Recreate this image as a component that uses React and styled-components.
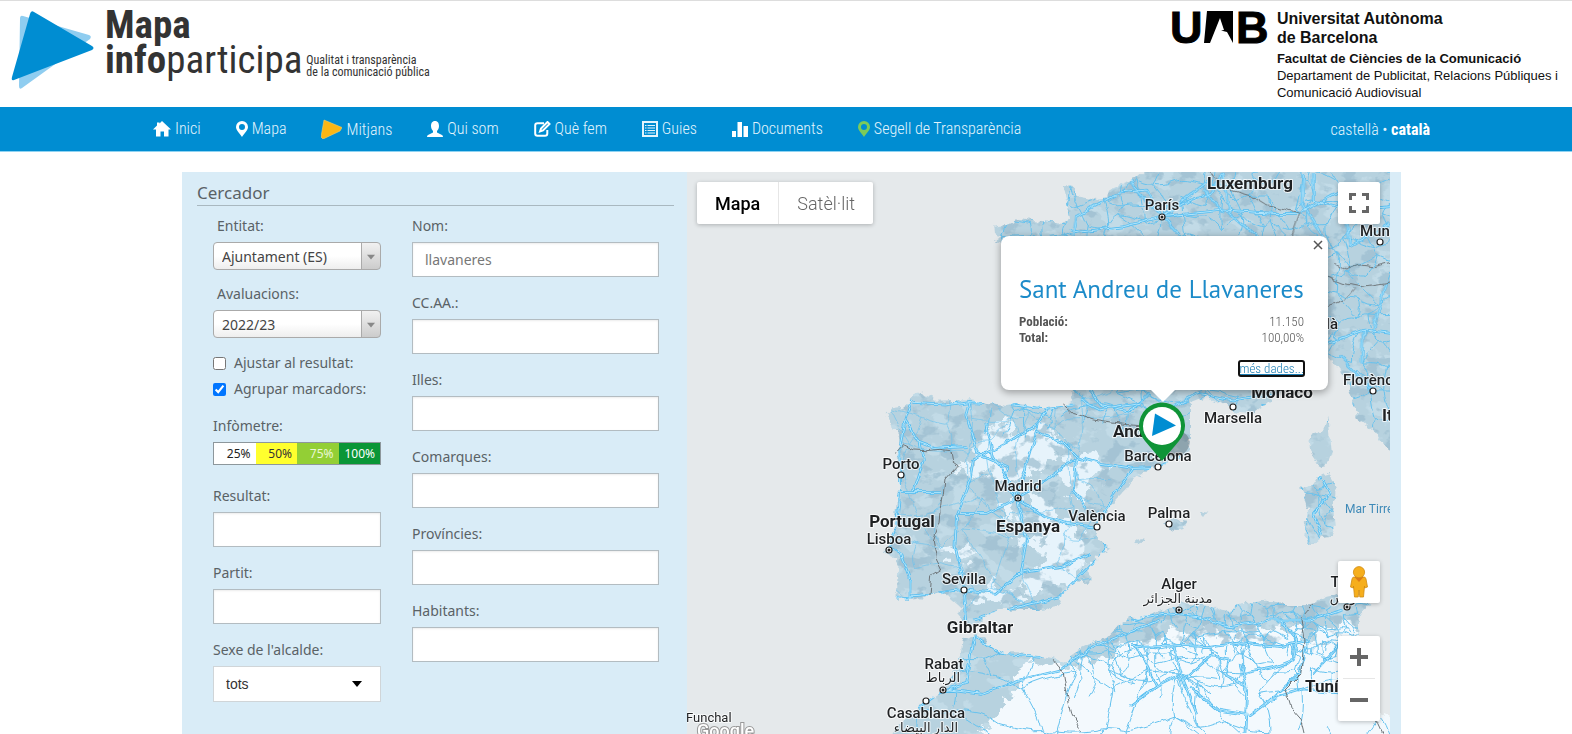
import React, { useState } from 'react'
import styled, { createGlobalStyle, css } from 'styled-components'

const condensed = '"Roboto Condensed", Roboto, sans-serif'
const humanist = '"PT Sans", "Noto Sans", sans-serif'
const formFont = '"Noto Sans", sans-serif'
const helvetica = '"Liberation Sans", Arial, sans-serif'

const GlobalStyle = createGlobalStyle`
    * {
        box-sizing: border-box;
    }

    body {
        margin: 0;
        background: #fff;
        color: #5a6266;
        font-family: ${formFont};
        font-size: 14px;
    }
`

/* ---------- header ---------- */

const Header = styled.header`
    display: flex;
    justify-content: space-between;
    align-items: flex-start;
    height: 107px;
    padding: 7px 14px 0 10px;
    border-top: 1px solid #ddd;
`

const Brand = styled.a`
    display: flex;
    align-items: flex-start;
    color: #333;
    font-family: ${condensed};
    text-decoration: none;

    svg {
        margin: 2px 10px 0 0;
    }
`

const BrandName = styled.span`
    font-size: 39px;
    font-weight: 400;
    line-height: 35px;

    b {
        font-weight: 700;
    }
`

const Tagline = styled.span`
    margin: 46px 0 0 4px;
    font-size: 12px;
    line-height: 12px;
`

const University = styled.div`
    display: flex;
    gap: 8px;
    color: #111;
    font-family: ${helvetica};
    font-size: 13px;
    line-height: 17px;

    p {
        margin: 0;
    }
`

const UniversityName = styled.p`
    padding: 1px 0 3px;
    font-size: 16px;
    font-weight: 700;
    line-height: 19px;
`

/* ---------- navigation ---------- */

const Nav = styled.nav`
    display: flex;
    justify-content: space-between;
    align-items: center;
    height: 45px;
    padding: 0 142px 0 153px;
    background: #008dd2;
    border-bottom: 1px solid #8fd3f2;
    font-family: ${condensed};
    font-size: 16px;
    font-weight: 300;
`

const NavList = styled.ul`
    display: flex;
    gap: 35px;
    margin: 0;
    padding: 0;
    list-style: none;
`

const NavLink = styled.a`
    display: flex;
    align-items: center;
    gap: 4px;
    color: #e2f4fd;
    text-decoration: none;
`

const Languages = styled.div`
    color: #e2f4fd;

    a {
        color: inherit;
        text-decoration: none;
    }

    a[aria-current] {
        color: #fff;
        font-weight: 700;
    }
`

/* ---------- search form ---------- */

const Main = styled.main`
    display: flex;
    margin: 20px 171px 0 182px;
    padding-right: 11px;
    background: #d9ecf7;
`

const Search = styled.form`
    flex: 0 0 505px;
    padding: 9px 13px 33px 15px;
`

const SearchTitle = styled.h2`
    margin: 0 0 8px;
    border-bottom: 1px solid #a9b8c0;
    font-size: 17px;
    font-weight: 400;
    line-height: 24px;
`

const Columns = styled.div`
    display: grid;
    grid-template-columns: 168px 247px;
    gap: 31px;
    padding-left: 16px;
`

const Column = styled.div`
    display: flex;
    flex-direction: column;
    gap: 14px;
`

const Filters = styled.div`
    display: flex;
    flex-direction: column;
    gap: 12px;
`

const Field = styled.div`
    display: flex;
    flex-direction: column;
    gap: 4px;
    line-height: 24px;
`

const Label = styled.label`
    padding-left: ${props => (props.$indent ? '4px' : '0')};
`

const box = css`
    width: 100%;
    border: 1px solid #b3bcc1;
    background: #fff;
    color: #777;
`

const TextInput = styled.input`
    ${box}
    height: 35px;
    padding: 0 12px;
    box-shadow: inset 0 1px 2px rgba(0, 0, 0, 0.08);
    font-family: ${formFont};
    font-size: 14px;
`

const SelectWrap = styled.div`
    position: relative;
    display: flex;

    svg {
        position: absolute;
        top: ${props => (props.$plain ? '15px' : '12px')};
        right: ${props => (props.$plain ? '19px' : '6px')};
        pointer-events: none;
    }
`

const ChosenSelect = styled.select`
    ${box}
    height: 28px;
    padding: 0 8px;
    border-color: #aaa;
    border-radius: 4px;
    appearance: none;
    background:
        linear-gradient(#aaa, #aaa) right 18px top / 1px 100% no-repeat,
        linear-gradient(#f1f1f1, #ccc) right / 18px 100% no-repeat,
        linear-gradient(#fff 50%, #eee);
    color: #444;
    font-family: ${formFont};
    font-size: 14px;
`

const PlainSelect = styled.select`
    ${box}
    height: 36px;
    padding: 0 12px;
    border-color: #d0d5d8;
    appearance: none;
    color: #333;
    font-family: ${helvetica};
    font-size: 14px;
`

const Checks = styled.div`
    display: flex;
    flex-direction: column;
`

const Check = styled.label`
    display: flex;
    align-items: center;
    gap: 8px;
    line-height: 26px;

    input {
        width: 13px;
        height: 13px;
        margin: 0;
    }
`

const Meter = styled.div`
    display: grid;
    grid-template-columns: repeat(4, 1fr);
    margin-bottom: 5px;
    border: 1px solid #8d979c;
    font-size: 12px;
    line-height: 21px;
`

const Step = styled.span`
    padding-right: 5px;
    background: ${props => props.$bg};
    color: ${props => props.$ink};
    text-align: right;
`

/* ---------- map ---------- */

const MapArea = styled.section`
    position: relative;
    flex: 1;
    min-width: 0;
    overflow: hidden;
    background: #e5e9eb;
    font-family: Roboto, sans-serif;
`

const MapCanvas = styled.svg`
    position: absolute;
    inset: 0;
    width: 100%;
    height: 100%;
`

const MapTypes = styled.div`
    position: absolute;
    top: 10px;
    left: 10px;
    display: flex;
    background: #fff;
    border-radius: 2px;
    box-shadow: 0 1px 4px rgba(0, 0, 0, 0.25);
`

const MapType = styled.button`
    height: 42px;
    padding: 0 18px;
    border: 0;
    background: none;
    color: ${props => (props.$active ? '#000' : '#666')};
    font-family: Roboto, sans-serif;
    font-size: 18px;
    font-weight: ${props => (props.$active ? 500 : 300)};

    & + & {
        border-left: 1px solid #e6e6e6;
    }
`

const ControlStack = styled.div`
    position: absolute;
    right: 10px;
    ${props => (props.$top ? 'top: 10px;' : 'bottom: 14px;')}
    display: flex;
    flex-direction: column;
    gap: 33px;
`

const ControlGroup = styled.div`
    display: flex;
    flex-direction: column;
    background: #fff;
    border-radius: 2px;
    box-shadow: 0 1px 4px rgba(0, 0, 0, 0.25);
`

const Control = styled.button`
    display: flex;
    align-items: center;
    justify-content: center;
    width: 42px;
    height: 42px;
    padding: 0;
    border: 0;
    background: none;
`

const Divider = styled.span`
    height: 1px;
    margin: 0 5px;
    background: #e6e6e6;
`

const Popup = styled.article`
    position: absolute;
    top: 64px;
    left: 314px;
    width: 327px;
    padding: 36px 24px 14px 18px;
    border-radius: 8px;
    background: #fff;
    box-shadow: 0 2px 7px 1px rgba(0, 0, 0, 0.3);
    color: #555;
    font-family: ${condensed};
    font-size: 13px;
    line-height: 16px;

    &::after {
        content: '';
        position: absolute;
        top: 100%;
        left: 150px;
        border: 12px solid transparent;
        border-top-color: #fff;
        border-bottom-width: 0;
    }

    h3 {
        margin: 0 0 8px;
        color: #1c8bc9;
        font-family: ${humanist};
        font-size: 25px;
        font-weight: 400;
        line-height: 34px;
        white-space: nowrap;
    }
`

const CloseButton = styled.button`
    position: absolute;
    top: 2px;
    right: 3px;
    display: flex;
    padding: 2px;
    border: 0;
    background: none;
`

const Facts = styled.dl`
    display: grid;
    grid-template-columns: 1fr auto;
    margin: 0 0 15px;

    dt {
        font-weight: 700;
    }

    dd {
        margin: 0;
        font-weight: 300;
        text-align: right;
    }
`

const MoreLink = styled.a`
    display: block;
    width: fit-content;
    margin-left: auto;
    border-radius: 2px;
    outline: 2px solid #101010;
    outline-offset: -1px;
    color: #1c7fb5;
    font-weight: 300;
    line-height: 15px;
`

const Place = styled.text`
    fill: ${props => (props.$sea ? '#3f8ab8' : '#1f2123')};
    stroke: ${props => (props.$sea ? 'none' : 'rgba(255, 255, 255, 0.75)')};
    stroke-width: 2px;
    stroke-linejoin: round;
    paint-order: stroke;
    font-family: Roboto, "DejaVu Sans", sans-serif;
    font-size: ${props => (props.$country ? 17 : props.$sea ? 12 : props.$small ? 13 : 15)}px;
    font-weight: ${props => (props.$country ? 700 : props.$sea || props.$small ? 400 : 500)};
`

/* ---------- drawings ---------- */

const Triangle = () => (
    <svg width="85" height="80" viewBox="0 0 85 80" aria-hidden="true">
        <path d="M13 6 L79 25 Q82 26 80 29 L12 78 Q9 80 9 76 L10 9 Q10 5 13 6Z" fill="#8fcdf0" />
        <path d="M24 2 L82 36 Q85 38 82 40 L4 70 Q1 71 2 67 L20 4 Q21 0 24 2Z" fill="#008dd2" />
    </svg>
)

const UabLogo = () => (
    <svg width="100" height="40" viewBox="0 0 100 40" role="img" aria-label="UAB">
        <g fontFamily="Liberation Sans, Arial, sans-serif" fontWeight="700" fontSize="45" stroke="#000" strokeWidth="1">
            <text x="1" y="35">U</text>
            <text x="67" y="35">B</text>
        </g>
        <path d="M38 3H64V35L58 24L52 22.500L55 22L51 10L41 35H35Z" />
    </svg>
)

const icons = {
    home: <path d="M9 0L18 8.500H15.500V15.500H11V10.500H7.500V15.500H3V8.500H0L4 4.500V1.500H6.500V2.500Z" fill="#fff" />,
    pin: <path fillRule="evenodd" d="M6 0A6 6 0 0 1 12 6C12 9 8 13 6 16C4 13 0 9 0 6A6 6 0 0 1 6 0ZM6 3A3 3 0 1 0 6 9A3 3 0 1 0 6 3Z" />,
    play: <path d="M3 1L21 8.500L19 12L2 20L0 18Z" fill="#fbb615" stroke="#f2d06b" strokeWidth=".6" />,
    user: <path d="M8 0C11 0 12 2.500 12 5C12 7 11 9 10 10V11.500L15 14Q16 14.500 16 16H0Q0 14.500 1 14L6 11.500V10C5 9 4 7 4 5C4 2.500 5 0 8 0Z" fill="#fff" />,
    edit: <path d="M10 2.200H3.500Q1.200 2.200 1.200 4.500V12.500Q1.200 14.800 3.500 14.800H11Q13.300 14.800 13.300 12.500V9M6 10.500L7 7.500L13.500 1L15.500 3L9 9.500Z" fill="none" stroke="#fff" strokeWidth="2" />,
    list: <g fill="none" stroke="#e2f4fd" strokeWidth="2"><path d="M1 1H15V15H1Z" /><path d="M3 4.500H13M3 7H13M3 9.500H13M3 12H13" strokeWidth="1.200" strokeDasharray="1.500 1 8" /></g>,
    bars: <path d="M0 10H4V16H0ZM5.500 1H10V16H5.500ZM11.500 5H16V16H11.500Z" fill="#fff" />,
}

const Icon = ({ name, w = 16, h = 16, fill }) => (
    <svg width={w} height={h} viewBox={`0 0 ${w} ${h}`} fill={fill} aria-hidden="true">{icons[name]}</svg>
)

const Caret = ({ w, color }) => (
    <svg width={w} height="7" viewBox="0 0 10 7" aria-hidden="true"><path d="M0 0H10L5 6Z" fill={color} /></svg>
)

const Pegman = () => (
    <svg width="18" height="32" viewBox="0 0 18 32" fill="#f6ae1c" stroke="#cf8a12" strokeWidth=".8" aria-hidden="true">
        <path d="M4 11H14Q15.500 11 16 13L17.500 21L14.500 22V20L13.500 31H9.800L9 24L8.200 31H4.500L3.500 20V22L.5 21L2 13Q2.500 11 4 11Z" />
        <path d="M4.500 11H13.500L9 16Z" fill="#dd7a17" stroke="none" />
        <circle cx="9" cy="6.200" r="5.600" />
    </svg>
)

/* ---------- map data ---------- */

const IBERIA = 'M80 105L100 85 130 80 155 60 165 42 185 38 215 50 225 62 290 60 340 62 380 68 440 75 480 72 540 80 600 78 640 70 650 0 990 0 990 180 985 215 920 255 893 262 850 280 820 295 790 335 760 365 735 395 705 440 710 470 748 505 715 530 690 560 688 605 650 605 610 640 590 680 540 690 470 690 415 690 370 710 345 735 320 730 295 700 300 680 270 655 230 640 200 650 150 660 105 655 115 630 110 580 115 530 90 530 70 510 85 500 95 470 105 420 115 350 118 290 110 230 118 190 115 150 95 150 90 125Z'
const FRANCE = 'M480 -10L440 25 400 40 360 60 355 85 320 90 270 80 250 50 215 48 225 75 235 105 240 150 235 160 180 155 130 150 90 145 50 165 10 170 12 190 40 195 15 215 40 225 90 260 150 300 230 400 270 560 245 700 300 760 400 840 590 800 590 740 600 700 650 680 690 700 740 725 790 730 830 700 860 670 900 640 960 590 1015 560 1050 600 1085 680 1100 740 1150 780 1185 830 1215 850 1215 -10Z'
const AFRICA = 'M810 715L770 740 740 770 690 790 650 810 620 850 580 835 530 825 480 820 430 820 395 800 360 765 345 762 310 775 300 830 280 880 250 930 200 965 150 1000 110 1040 90 1075 1600 1075 1600 1020 1540 990 1535 830 1500 770 1495 710 1510 690 1530 670 1510 660 1450 640 1400 650 1350 675 1280 675 1230 660 1200 665 1140 670 1110 695 1040 675 960 670 930 685 870 705Z'
const CORSICA = 'M1015 740L1020 790 1025 840 1005 890 985 880 960 840 955 810 970 790 1000 780 1010 760Z'
const SARDINIA = 'M510 75L530 85 560 65 570 48 590 42 605 55 620 80 618 110 610 150 615 200 605 230 580 235 560 250 535 248 525 235 530 190 535 150 520 110Z'
const ISLANDS = 'M100 190L140 178 175 182 160 210 140 215 105 200ZM208 150L235 155 225 168ZM15 250L30 238 40 240 30 258ZM555 5L592 5 575 18Z'

const PLAINS = 'M345 165L390 150 430 130 460 175 500 160 530 130 610 170 620 230 560 250 500 290 430 310 380 270 330 290ZM600 265L680 230 750 250 730 290 700 310 670 390 640 350 620 340ZM500 340L560 340 600 410 680 470 670 560 640 610 600 625 480 630 500 580 560 540 540 500 440 490 500 470 560 470 540 400ZM240 500L330 490 370 540 340 545 300 560ZM330 650L420 620 500 650 430 680ZM440 350L480 380 460 430 420 400ZM290 260L320 240 330 270Z'
const SAHARA = 'M500 830L560 850 620 870 700 845 760 810 900 770 1000 745 1100 750 1250 740 1380 760 1480 740 1520 800 1600 1000 1600 1090 350 1090 400 1000 430 960 480 930 470 880Z'

const BORDERS = [
    ['translate(860 380) scale(.33333)', 'M110 215L130 195 160 210 200 212 240 208 270 212 275 240 295 255 255 300 250 340 245 380 240 425 220 480 230 540 245 570 215 590 210 645M610 75L640 100 700 120 760 130 850 138M580 838L610 880 620 940 635 1000 665 1055'],
    ['translate(990 170) scale(.33333)', 'M640 0L680 20 720 60 790 80 830 105 880 115 930 130 905 200M1030 280L1070 300 1110 285 1150 290 1210 275M1010 320L1060 340 1110 350 1210 335M1010 410L1060 390 1090 355'],
    ['translate(1130 460) scale(.33333)', 'M545 435L515 470 525 540 520 600 515 640 465 690 480 740 515 780 525 822M745 750L740 790 755 822'],
]

const MAIN_ROADS = [
    ['translate(860 380) scale(.33333)', 'M155 60L135 120 120 200 118 350 110 430 85 500 120 520 150 600 150 655M135 120L180 190 220 205 320 200M330 65L320 110 340 170 350 220 440 260 440 330 473 355M160 70L250 75 330 65 460 72 560 85 640 75M560 85L530 130 440 190 340 240 330 300 290 400 285 500 315 630M530 150L610 190 650 230 720 250 820 265 893 262 980 220M820 265L760 350 710 440 740 505 690 560 600 650 420 695 340 720M473 355L500 250 535 130M473 355L560 300 650 235M473 355L550 410 620 430 710 442M473 355L380 400 290 400M473 355L500 480 480 580 410 640 313 630 210 645 110 655M480 580L600 560 690 520M473 355L450 310 400 230 380 130M118 335L240 335M180 190L190 240 160 330M690 30L720 75 800 95 850 60M650 235L640 330 680 390M313 630L320 720M345 765L330 850 320 910 250 930 150 1000M250 925L370 940 480 900 600 870 700 800 900 720M345 765L420 820 560 830'],
    ['translate(990 170) scale(.33333)', 'M516 140L470 60 380 70M516 140L430 50 410 10M516 140L600 90 660 70 700 10M516 140L700 120 850 130 930 130M516 140L400 170 240 190M516 140L570 200M516 140L660 30M250 200L260 140 380 75M700 130L640 60M700 10L720 130 800 200M940 10L935 100 1000 200M930 130L1060 60M1060 60L1080 230 1200 160M970 10L970 90 1080 120 1200 110M1010 520L1120 480 1200 490M1120 480L1115 580M1150 660L1050 560M1190 340L1150 480M270 690L330 720 450 700 480 670M530 720L620 670 730 690 860 670'],
    ['translate(1130 460) scale(.33333)', 'M0 480L100 460 200 470 300 500 420 480 540 480 640 450M0 560L130 555 230 560 330 545 450 560 540 540M20 560L80 680 0 740M130 555L160 660 200 760M160 660L240 590 300 600M180 680L260 750 360 765 420 720 510 640 530 560M330 610L350 690 345 822M300 600L290 650 350 680M80 680L160 640M420 720L520 690 640 700M550 640L640 540M450 480L500 540 490 600 440 620 340 640M555 15L570 60M580 60L600 100 550 160 575 230'],
]

const makeRandom = seed => () => {
    seed = (seed * 1664525 + 1013904223) % 4294967296
    return seed / 4294967296
}

// jittered grid of junctions, joined to their neighbours
const roadNet = ({ seed, x, y, w, h, step }) => {
    const random = makeRandom(seed)
    const cols = Math.ceil(w / step) + 1
    const rows = Math.ceil(h / step) + 1
    const at = []
    for (let r = 0; r < rows; r++) {
        at.push([])
        for (let c = 0; c < cols; c++) {
            at[r].push([x + (c + random() * 0.9 - 0.45) * step, y + (r + random() * 0.9 - 0.45) * step])
        }
    }
    let d = ''
    const join = (a, b) => {
        const bend = () => (random() - 0.5) * step * 0.5
        const mx = (a[0] + b[0]) / 2 + bend()
        const my = (a[1] + b[1]) / 2 + bend()
        d += `M${a[0].toFixed(1)} ${a[1].toFixed(1)}Q${mx.toFixed(1)} ${my.toFixed(1)} ${b[0].toFixed(1)} ${b[1].toFixed(1)}`
    }
    for (let r = 0; r < rows - 1; r++) {
        for (let c = 0; c < cols - 1; c++) {
            if (random() < 0.72) join(at[r][c], at[r][c + 1])
            if (random() < 0.72) join(at[r][c], at[r + 1][c])
            if (random() < 0.25) join(at[r][c], at[r + 1][c + 1])
        }
    }
    return d
}

const MINOR_ROADS = [
    { seed: 11, x: 990, y: 165, w: 410, h: 260, step: 19 },
    { seed: 5, x: 880, y: 390, w: 240, h: 235, step: 30 },
    { seed: 23, x: 1075, y: 605, w: 320, h: 50, step: 10 },
    { seed: 42, x: 1075, y: 640, w: 320, h: 40, step: 17 },
    { seed: 31, x: 930, y: 650, w: 460, h: 100, step: 34 },
    { seed: 8, x: 1300, y: 480, w: 50, h: 70, step: 20 },
].map(roadNet)

const PLACES = [
    { name: 'Luxemburg', x: 1250, y: 189, country: true },
    { name: 'París', x: 1162, y: 210, dot: [1162, 217], capital: true },
    { name: 'Munic', x: 1360, y: 236, start: true, dot: [1380, 242] },
    { name: 'Milà', x: 1338, y: 329, end: true },
    { name: 'Florència', x: 1343, y: 385, start: true, dot: [1373, 391] },
    { name: 'Itàlia', x: 1382, y: 421, start: true, country: true },
    { name: 'Monaco', x: 1282, y: 398, country: true },
    { name: 'Marsella', x: 1233, y: 423, dot: [1233, 407] },
    { name: 'Andorra', x: 1113, y: 437, start: true, country: true },
    { name: 'Barcelona', x: 1158, y: 461, dot: [1158, 467] },
    { name: 'Porto', x: 901, y: 469, dot: [901, 475] },
    { name: 'Madrid', x: 1018, y: 491, dot: [1018, 498], capital: true },
    { name: 'València', x: 1097, y: 521, dot: [1097, 527] },
    { name: 'Espanya', x: 1028, y: 532, country: true },
    { name: 'Palma', x: 1169, y: 518, dot: [1169, 524] },
    { name: 'Portugal', x: 902, y: 527, country: true },
    { name: 'Lisboa', x: 889, y: 544, dot: [889, 550], capital: true },
    { name: 'Sevilla', x: 964, y: 584, dot: [964, 590] },
    { name: 'Gibraltar', x: 980, y: 633, country: true },
    { name: 'Rabat', x: 944, y: 669, dot: [943, 690], capital: true },
    { name: 'الرباط', x: 943, y: 682, small: true },
    { name: 'Casablanca', x: 926, y: 718, dot: [926, 701] },
    { name: 'الدار البيضاء', x: 926, y: 732, small: true },
    { name: 'Alger', x: 1179, y: 589, dot: [1179, 610], capital: true },
    { name: 'مدينة الجزائر', x: 1178, y: 603, small: true },
    { name: 'Tunis', x: 1349, y: 587, dot: [1347, 607], capital: true },
    { name: 'تونس', x: 1345, y: 602, small: true },
    { name: 'Tunísia', x: 1305, y: 692, start: true, country: true },
    { name: 'Mar Tirrena', x: 1345, y: 513, start: true, sea: true },
    { name: 'Funchal', x: 686, y: 722, start: true, small: true },
]

const anchorOf = p => (p.start ? 'start' : p.end ? 'end' : 'middle')

const Land = () => (
    <>
        <g transform="translate(860 380) scale(.33333)"><path d={IBERIA} /></g>
        <g transform="translate(990 170) scale(.33333)"><path d={FRANCE} /><path d={CORSICA} /></g>
        <g transform="translate(860 380) scale(.33333)"><path d={AFRICA} /></g>
        <g transform="translate(1130 460) scale(.33333)"><path d={SARDINIA} /><path d={ISLANDS} /></g>
    </>
)

const TerrainMap = () => (
    <MapCanvas role="img" aria-label="Mapa">
        <defs>
            <filter id="rough" filterUnits="userSpaceOnUse" x="680" y="165" width="1200" height="600">
                <feTurbulence type="fractalNoise" baseFrequency=".12" numOctaves="3" seed="4" />
                <feDisplacementMap in="SourceGraphic" scale="9" xChannelSelector="R" yChannelSelector="G" />
            </filter>
            <filter id="patches" filterUnits="userSpaceOnUse" x="680" y="165" width="1200" height="600">
                <feTurbulence type="fractalNoise" baseFrequency=".06" numOctaves="4" seed="17" />
                <feDisplacementMap in="SourceGraphic" scale="34" xChannelSelector="R" yChannelSelector="G" />
            </filter>
            <filter id="wobble" filterUnits="userSpaceOnUse" x="680" y="165" width="1200" height="600">
                <feTurbulence type="fractalNoise" baseFrequency=".08" numOctaves="2" seed="9" />
                <feDisplacementMap in="SourceGraphic" scale="7" xChannelSelector="R" yChannelSelector="G" />
            </filter>
            <filter id="hills" x="0" y="0" width="1" height="1" colorInterpolationFilters="sRGB">
                <feTurbulence type="fractalNoise" baseFrequency=".05 .07" numOctaves="4" seed="12" />
                <feColorMatrix values="0 0 0 0 .62  0 0 0 0 .75  0 0 0 0 .82  10 0 0 0 -5.5" />
            </filter>
            <filter id="fields" x="0" y="0" width="1" height="1" colorInterpolationFilters="sRGB">
                <feTurbulence type="fractalNoise" baseFrequency=".04 .055" numOctaves="4" seed="31" />
                <feColorMatrix values="0 0 0 0 .85  0 0 0 0 .93  0 0 0 0 .97  14 0 0 0 -8" />
            </filter>
            <mask id="land" maskUnits="userSpaceOnUse" x="680" y="165" width="1200" height="600">
                <g fill="#fff" filter="url(#rough)"><Land /></g>
            </mask>
        </defs>
        <g transform="translate(-687 -172)">
            <g mask="url(#land)">
                <rect x="680" y="165" width="1200" height="600" fill="#b7d2df" />
                <rect x="860" y="165" width="540" height="600" filter="url(#fields)" opacity=".35" />
                <g filter="url(#patches)">
                    <g transform="translate(860 380) scale(.33333)">
                        <path d={PLAINS} fill="#e6f3fb" />
                        <path d={SAHARA} fill="#f3f9fd" />
                    </g>
                </g>
                <rect x="860" y="165" width="540" height="480" filter="url(#hills)" opacity=".75" />
                <g fill="none" strokeLinejoin="round" filter="url(#wobble)">
                    {MINOR_ROADS.map((d, i) => (
                        <path key={i} d={d} stroke="#66c2ee" strokeWidth="1" opacity={i === 1 ? 0.6 : 1} />
                    ))}
                    {MAIN_ROADS.map(([transform, d]) => (
                        <g key={d} transform={transform}>
                            <path d={d} stroke="#56bdf0" strokeWidth="8" />
                            <path d={d} stroke="#b5e7fc" strokeWidth="3" />
                        </g>
                    ))}
                </g>
            </g>
            <g fill="none" stroke="#6d7478" filter="url(#wobble)">
                {BORDERS.map(([transform, d]) => (
                    <path key={d} transform={transform} d={d} strokeWidth="3" />
                ))}
            </g>
            {PLACES.filter(p => p.dot).map(p => (
                <g key={p.name} stroke="#222" fill="#fff">
                    <circle cx={p.dot[0]} cy={p.dot[1]} r="3" strokeWidth="1.200" />
                    {p.capital && <circle cx={p.dot[0]} cy={p.dot[1]} r="1.500" fill="#222" stroke="none" />}
                </g>
            ))}
            {PLACES.map(p => (
                <Place key={p.name} x={p.x} y={p.y} textAnchor={anchorOf(p)} $country={p.country} $sea={p.sea} $small={p.small}>
                    {p.name}
                </Place>
            ))}
            <text x="697" y="737" fontFamily="Roboto, sans-serif" fontSize="18" fontWeight="500" fill="#fff" stroke="#999" strokeWidth="2" paintOrder="stroke">Google</text>
            <ellipse cx="1176" cy="444" rx="14" ry="12" fill="#000" opacity=".22" transform="rotate(-30 1176 444)" />
            <path d="M1162 461L1145 441A23 23 0 1 1 1179 441Z" fill="#0f9437" />
            <circle cx="1162" cy="426" r="19" fill="#fff" />
            <path d="M1155 413.500L1176 425.500L1152 436Z" fill="#008dd2" />
        </g>
    </MapCanvas>
)

/* ---------- page ---------- */

const NAV = [
    { label: 'Inici', icon: 'home', w: 18 },
    { label: 'Mapa', icon: 'pin', w: 12, fill: '#fff' },
    { label: 'Mitjans', icon: 'play', w: 21, h: 20 },
    { label: 'Qui som', icon: 'user' },
    { label: 'Què fem', icon: 'edit', w: 17 },
    { label: 'Guies', icon: 'list' },
    { label: 'Documents', icon: 'bars' },
    { label: 'Segell de Transparència', icon: 'pin', w: 12, fill: '#7ccb5a' },
]

const STEPS = [
    ['25%', '#fff', '#222'],
    ['50%', '#ffff2e', '#333'],
    ['75%', '#93cf35', '#eaf7d5'],
    ['100%', '#0a9637', '#fff'],
]

const Text = ({ id, label, value = '' }) => {
    const [text, setText] = useState(value)
    return (
        <Field>
            <Label htmlFor={id}>{label}</Label>
            <TextInput id={id} value={text} onChange={e => setText(e.target.value)} />
        </Field>
    )
}

const Chosen = ({ id, label, option }) => (
    <Field>
        <Label htmlFor={id} $indent>{label}</Label>
        <SelectWrap>
            <ChosenSelect id={id}><option>{option}</option></ChosenSelect>
            <Caret w={8} color="#888" />
        </SelectWrap>
    </Field>
)

const App = () => {
    const [fit, setFit] = useState(false)
    const [group, setGroup] = useState(true)

    return (
        <>
            <GlobalStyle />
            <Header>
                <Brand href="#inici">
                    <Triangle />
                    <BrandName><b>Mapa</b><br /><b>info</b>participa</BrandName>
                    <Tagline>Qualitat i transparència<br />de la comunicació pública</Tagline>
                </Brand>
                <University>
                    <UabLogo />
                    <div>
                        <UniversityName>Universitat Autònoma<br />de Barcelona</UniversityName>
                        <p><b>Facultat de Ciències de la Comunicació</b></p>
                        <p>Departament de Publicitat, Relacions Públiques i<br />Comunicació Audiovisual</p>
                    </div>
                </University>
            </Header>
            <Nav>
                <NavList>
                    {NAV.map(({ label, icon, w, h, fill }) => (
                        <li key={label}>
                            <NavLink href="#"><Icon name={icon} w={w} h={h} fill={fill} />{label}</NavLink>
                        </li>
                    ))}
                </NavList>
                <Languages>
                    <a href="#es">castellà</a> • <a href="#ca" aria-current="true">català</a>
                </Languages>
            </Nav>
            <Main>
                <Search>
                    <SearchTitle>Cercador</SearchTitle>
                    <Columns>
                        <Column>
                            <Filters>
                                <Chosen id="entitat" label="Entitat:" option="Ajuntament (ES)" />
                                <Chosen id="avaluacions" label="Avaluacions:" option="2022/23" />
                                <Checks>
                                    <Check>
                                        <input type="checkbox" checked={fit} onChange={() => setFit(!fit)} />
                                        Ajustar al resultat:
                                    </Check>
                                    <Check>
                                        <input type="checkbox" checked={group} onChange={() => setGroup(!group)} />
                                        Agrupar marcadors:
                                    </Check>
                                </Checks>
                                <Field>
                                    <span>Infòmetre:</span>
                                    <Meter>
                                        {STEPS.map(([label, bg, ink]) => <Step key={label} $bg={bg} $ink={ink}>{label}</Step>)}
                                    </Meter>
                                </Field>
                            </Filters>
                            <Text id="resultat" label="Resultat:" />
                            <Text id="partit" label="Partit:" />
                            <Field>
                                <Label htmlFor="sexe">Sexe de l'alcalde:</Label>
                                <SelectWrap $plain>
                                    <PlainSelect id="sexe"><option>tots</option></PlainSelect>
                                    <Caret w={10} color="#000" />
                                </SelectWrap>
                            </Field>
                        </Column>
                        <Column>
                            <Text id="nom" label="Nom:" value="llavaneres" />
                            <Text id="ccaa" label="CC.AA.:" />
                            <Text id="illes" label="Illes:" />
                            <Text id="comarques" label="Comarques:" />
                            <Text id="provincies" label="Províncies:" />
                            <Text id="habitants" label="Habitants:" />
                        </Column>
                    </Columns>
                </Search>
                <MapArea>
                    <TerrainMap />
                    <MapTypes>
                        <MapType type="button" $active>Mapa</MapType>
                        <MapType type="button">Satèl·lit</MapType>
                    </MapTypes>
                    <Popup>
                        <CloseButton type="button" aria-label="Tanca">
                            <svg width="10" height="10" stroke="#555" strokeWidth="1.500"><path d="M1 1L9 9M9 1L1 9" /></svg>
                        </CloseButton>
                        <h3>Sant Andreu de Llavaneres</h3>
                        <Facts>
                            <dt>Població:</dt><dd>11.150</dd>
                            <dt>Total:</dt><dd>100,00%</dd>
                        </Facts>
                        <MoreLink href="#dades">més dades...</MoreLink>
                    </Popup>
                    <ControlStack $top>
                        <ControlGroup>
                            <Control type="button" aria-label="Pantalla completa">
                                <svg width="20" height="20" fill="none" stroke="#666" strokeWidth="3"><path d="M1.500 7V1.500H7M13 1.500H18.500V7M18.500 13V18.500H13M7 18.500H1.500V13" /></svg>
                            </Control>
                        </ControlGroup>
                    </ControlStack>
                    <ControlStack>
                        <ControlGroup>
                            <Control type="button" aria-label="Street View"><Pegman /></Control>
                        </ControlGroup>
                        <ControlGroup>
                            <Control type="button" aria-label="Amplia">
                                <svg width="18" height="18" stroke="#666" strokeWidth="4"><path d="M0 9H18M9 0V18" /></svg>
                            </Control>
                            <Divider />
                            <Control type="button" aria-label="Redueix">
                                <svg width="18" height="18" stroke="#666" strokeWidth="4"><path d="M0 9H18" /></svg>
                            </Control>
                        </ControlGroup>
                    </ControlStack>
                </MapArea>
            </Main>
        </>
    )
}

export default App
